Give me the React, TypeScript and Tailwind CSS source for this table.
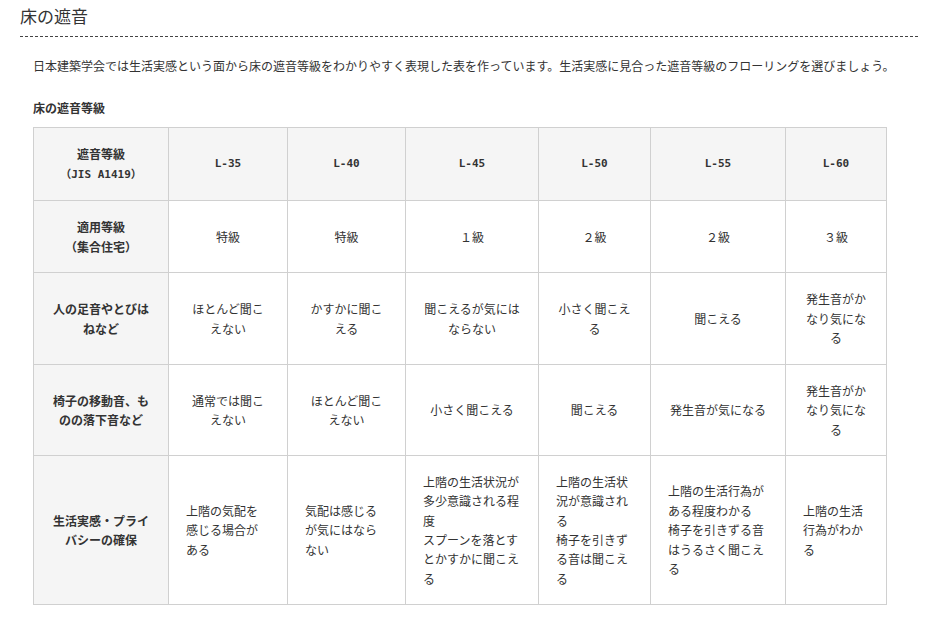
const font = { fontFamily: '"Noto Sans CJK JP", "Noto Sans", sans-serif' };
const mono = { fontFamily: '"DejaVu Sans Mono", "Noto Sans CJK JP", monospace' };

type Row = {
  head: string[];
  cells: string[][];
  height: string;
  left?: boolean;
};

const grades = ["L-35", "L-40", "L-45", "L-50", "L-55", "L-60"];

const rows: Row[] = [
  {
    head: ["適用等級", "（集合住宅）"],
    cells: [["特級"], ["特級"], ["１級"], ["２級"], ["２級"], ["３級"]],
    height: "h-[72px]",
  },
  {
    head: ["人の足音やとびは", "ねなど"],
    cells: [
      ["ほとんど聞こ", "えない"],
      ["かすかに聞こ", "える"],
      ["聞こえるが気には", "ならない"],
      ["小さく聞こえ", "る"],
      ["聞こえる"],
      ["発生音がか", "なり気にな", "る"],
    ],
    height: "h-[92px]",
  },
  {
    head: ["椅子の移動音、も", "のの落下音など"],
    cells: [
      ["通常では聞こ", "えない"],
      ["ほとんど聞こ", "えない"],
      ["小さく聞こえる"],
      ["聞こえる"],
      ["発生音が気になる"],
      ["発生音がか", "なり気にな", "る"],
    ],
    height: "h-[91px]",
  },
  {
    head: ["生活実感・プライ", "バシーの確保"],
    cells: [
      ["上階の気配を", "感じる場合が", "ある"],
      ["気配は感じる", "が気にはなら", "ない"],
      ["上階の生活状況が", "多少意識される程", "度", "スプーンを落とす", "とかすかに聞こえ", "る"],
      ["上階の生活状", "況が意識され", "る", "椅子を引きず", "る音は聞こえ", "る"],
      ["上階の生活行為が", "ある程度わかる", "椅子を引きずる音", "はうるさく聞こえ", "る"],
      ["上階の生活", "行為がわか", "る"],
    ],
    height: "h-[149px]",
    left: true,
  },
];

function Lines({ lines }: { lines: string[] }) {
  return (
    <>
      {lines.map((l, i) => (
        <span key={i}>
          {l}
          {i < lines.length - 1 && <br />}
        </span>
      ))}
    </>
  );
}

export default function App() {
  return (
    <div className="bg-white text-[#333] w-[931px] min-h-[621px]" style={font}>
      <div className="pl-5 pr-[13px] pt-1">
        <h2 className="text-[17px] leading-6 font-normal text-[#333] pb-2 border-b border-dashed border-[#444]">
          床の遮音
        </h2>
      </div>

      <div className="pl-[33px]">
        <p className="mt-[19px] text-[12px] leading-5 whitespace-nowrap">
          日本建築学会では生活実感という面から床の遮音等級をわかりやすく表現した表を作っています。生活実感に見合った遮音等級のフローリングを選びましょう。
        </p>

        <h3 className="mt-[22px] mb-[9px] text-[12px] leading-5 font-bold">床の遮音等級</h3>

        <table className="w-[853px] table-fixed border-collapse text-[12px] leading-[19.4px]">
          <colgroup>
            <col className="w-[135px]" />
            <col className="w-[119px]" />
            <col className="w-[118px]" />
            <col className="w-[133px]" />
            <col className="w-[112px]" />
            <col className="w-[135px]" />
            <col className="w-[101px]" />
          </colgroup>
          <thead>
            <tr className="h-[73px] bg-[#f5f5f5]">
              <th className="border border-[#d0d0d0] text-center font-bold px-2">
                遮音等級
                <br />
                <span className="text-[11px] text-[#333]" style={mono}>（JIS A1419）</span>
              </th>
              {grades.map((g) => (
                <th key={g} className="border border-[#d0d0d0] text-center font-bold text-[11px] text-[#333]" style={mono}>
                  {g}
                </th>
              ))}
            </tr>
          </thead>
          <tbody>
            {rows.map((r, ri) => (
              <tr key={ri} className={r.height}>
                <th className="border border-[#d0d0d0] bg-[#f5f5f5] text-center font-bold px-2 whitespace-nowrap">
                  <Lines lines={r.head} />
                </th>
                {r.cells.map((c, ci) => (
                  <td
                    key={ci}
                    className={
                      r.left
                        ? "border border-[#d0d0d0] text-left pl-[17px] pr-1 whitespace-nowrap align-middle"
                        : "border border-[#d0d0d0] text-center px-1 whitespace-nowrap align-middle"
                    }
                  >
                    <Lines lines={c} />
                  </td>
                ))}
              </tr>
            ))}
          </tbody>
        </table>
      </div>
    </div>
  );
}
